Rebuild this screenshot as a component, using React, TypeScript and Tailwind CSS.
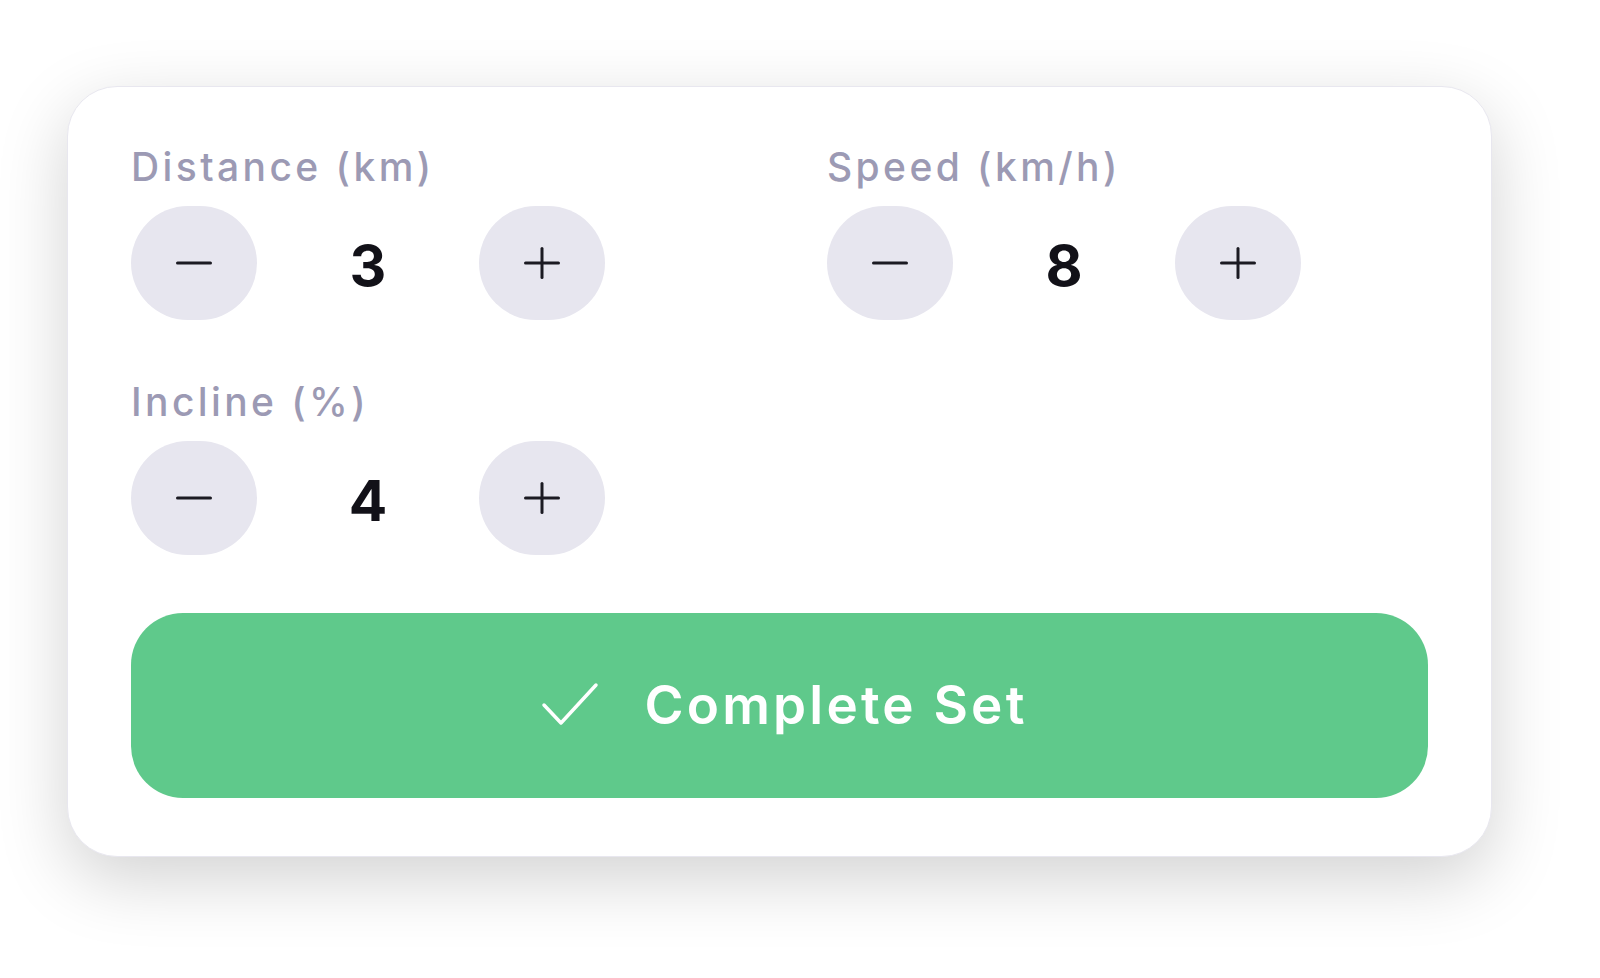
import React from "react";

function MinusIcon() {
  return (
    <svg width="36" height="6" viewBox="0 0 36 6" fill="none">
      <line x1="1.5" y1="3" x2="34.5" y2="3" stroke="#1b1a22" strokeWidth="3" strokeLinecap="round" />
    </svg>
  );
}

function PlusIcon() {
  return (
    <svg width="36" height="32" viewBox="0 0 36 32" fill="none">
      <line x1="1.5" y1="16" x2="34.5" y2="16" stroke="#1b1a22" strokeWidth="3" strokeLinecap="round" />
      <line x1="18" y1="1.5" x2="18" y2="30.5" stroke="#1b1a22" strokeWidth="3" strokeLinecap="round" />
    </svg>
  );
}

function CheckIcon() {
  return (
    <svg width="58" height="44" viewBox="0 0 58 44" fill="none">
      <polyline
        points="3,23 20,41 55,3"
        stroke="#ffffff"
        strokeWidth="3.5"
        strokeLinecap="round"
        strokeLinejoin="round"
        fill="none"
      />
    </svg>
  );
}

function Stepper({ label, value }: { label: string; value: number }) {
  return (
    <div className="flex flex-col gap-[16px]">
      <div className="text-[39px] leading-[46px] font-medium text-[#9c9ab4] tracking-[3.4px]">{label}</div>
      <div className="flex items-center">
        <button className="flex h-[114px] w-[126px] items-center justify-center rounded-full bg-[#e7e6ef]">
          <MinusIcon />
        </button>
        <div className="w-[222px] pt-[4px] text-center text-[57px] font-bold leading-none text-[#121118]">{value}</div>
        <button className="flex h-[114px] w-[126px] items-center justify-center rounded-full bg-[#e7e6ef]">
          <PlusIcon />
        </button>
      </div>
    </div>
  );
}

export default function App() {
  return (
    <div
      className="min-h-screen bg-white pl-[67px] pt-[86px]"
      style={{ fontFamily: "Inter, 'Noto Sans', 'Liberation Sans', sans-serif" }}
    >
      <div className="box-border w-[1425px] rounded-[50px] border border-[#e8e7ef] bg-white pb-[58px] pl-[63px] pr-[63px] pt-[57px] shadow-[0_22px_70px_rgba(0,0,0,0.18)]">
        <div className="grid grid-cols-2 gap-x-[95px] gap-y-[59px]">
          <Stepper label="Distance (km)" value={3} />
          <Stepper label="Speed (km/h)" value={8} />
          <Stepper label="Incline (%)" value={4} />
        </div>
        <button className="mt-[58px] flex h-[185px] w-full items-center justify-center gap-[45px] rounded-[52px] bg-[#5fc98b] pl-[10px]">
          <span className="-mt-[4px] flex">
            <CheckIcon />
          </span>
          <span className="text-[53px] font-semibold leading-none tracking-[3.2px] text-white">Complete Set</span>
        </button>
      </div>
    </div>
  );
}
